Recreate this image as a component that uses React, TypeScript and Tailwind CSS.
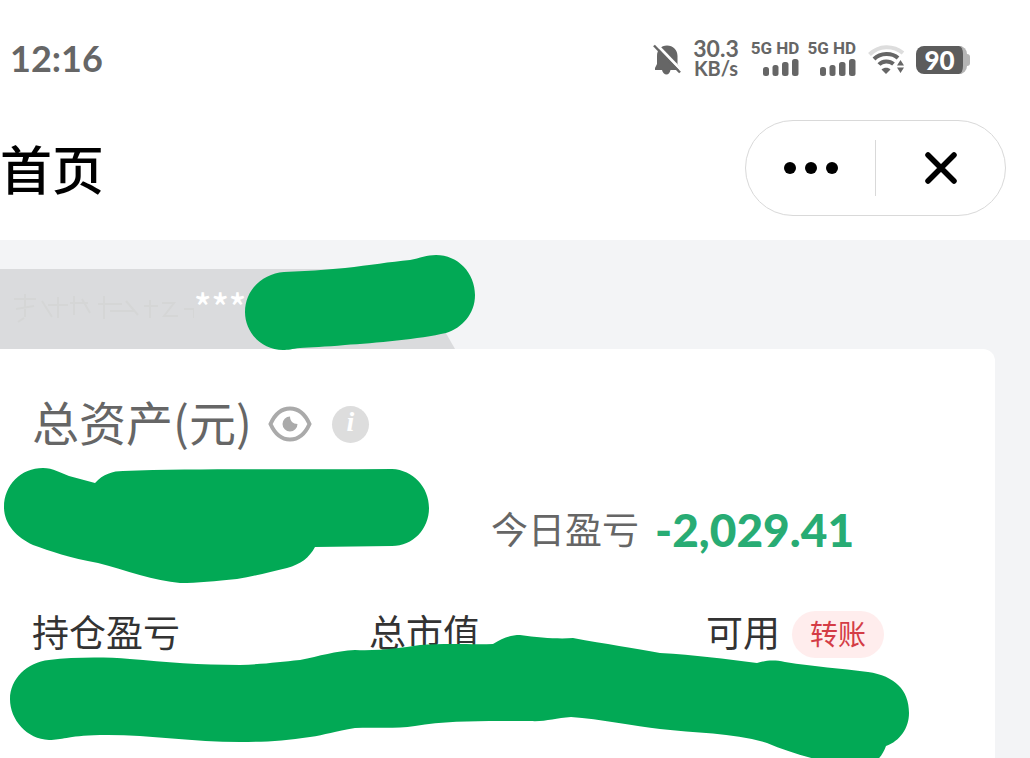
import React from 'react';

const SignalBars: React.FC = () => (
  <svg viewBox="0 0 36 17" className="h-[17px] w-9" fill="#666666">
    <rect x="0" y="8" width="6" height="9" rx="2.5" />
    <rect x="9.5" y="6" width="6" height="11" rx="2.5" />
    <rect x="19" y="3" width="6.5" height="14" rx="2.5" />
    <rect x="29" y="0" width="6.5" height="17" rx="2.5" />
  </svg>
);

const Sim: React.FC = () => (
  <div className="flex flex-col items-end gap-1 pb-1">
    <span className="font-['Roboto',sans-serif] text-[17px] leading-[14px] font-bold whitespace-nowrap">5G HD</span>
    <SignalBars />
  </div>
);

const StatusBar: React.FC = () => (
  <div className="flex h-[120px] items-center justify-between pl-2.5 pr-[60px] font-['Lato',sans-serif] text-[#666666]">
    <span className="pb-1 text-[36px] leading-[40px] font-bold">12:16</span>
    <div className="flex items-center">
      {/* Muted bell */}
      <svg viewBox="0 0 28 32" className="mr-3 h-8 w-7" fill="#666666">
        <path d="M14 1.5C20 1.5 24.5 6 24.5 12V20L27 24V26H17.5C17 28.5 15.5 30.5 13.5 30.5S9.5 28.5 9 26H2V24L4 20V12C4 6 8 1.5 14 1.5Z" />
        <path d="M3 0L29 27" stroke="#ffffff" strokeWidth="3" />
        <path d="M1 1.5L27 28.5" stroke="#666666" strokeWidth="2.5" />
      </svg>
      <div className="mr-3 flex flex-col items-center pb-1">
        <span className="text-[23px] leading-[20px] font-bold">30.3</span>
        <span className="text-[20px] leading-[20px] font-bold">KB/s</span>
      </div>
      <div className="mr-3 flex gap-2">
        <Sim />
        <Sim />
      </div>
      {/* Wi-Fi */}
      <svg viewBox="0 0 38 30" className="mr-2.5 h-[30px] w-[38px]" fill="none" stroke="#666666" strokeWidth="4">
        <path d="M1.5 9.5C11 0 25 0 35 8" stroke="#dddddd" />
        <path d="M6 14C12.5 7.5 24 7.5 30 13" />
        <path d="M11 19.5C14.5 15.5 21.5 15.5 25.5 19" />
        <path d="M18 29L13.5 24.5C16 22 20.5 22 22.5 24.5Z" fill="#666666" stroke="none" />
        <path d="M32.5 15L36 20.5H29ZM32.5 28L36 22.5H29Z" fill="#666666" stroke="none" />
      </svg>
      {/* Battery */}
      <div className="flex items-center">
        <div className="flex h-7 w-[51px] items-center justify-center rounded-lg border-r-4 border-[#b5b5b5] bg-[#5c5c5c] text-[26px] leading-7 font-black text-white">
          90
        </div>
        <div className="h-3 w-[3px] rounded-r bg-[#b5b5b5]" />
      </div>
    </div>
  </div>
);

const NavBar: React.FC = () => (
  <div className="flex items-start justify-between pr-6 pb-6">
    <h1 className="text-[52px] leading-[96px] font-medium text-black">首页</h1>
    <div className="flex h-24 w-[261px] items-center rounded-full border border-[#d9d9d9]">
      <button type="button" aria-label="更多" className="flex h-full flex-1 items-center justify-center gap-[9px]">
        <span className="h-3 w-3 rounded-full bg-black" />
        <span className="h-3 w-3 rounded-full bg-black" />
        <span className="h-3 w-3 rounded-full bg-black" />
      </button>
      <span className="h-14 w-px bg-[#d9d9d9]" />
      <button type="button" aria-label="关闭" className="flex h-full flex-1 items-center justify-center">
        <svg viewBox="0 0 32 32" className="h-8 w-8" stroke="#000000" strokeWidth="5.5" strokeLinecap="round">
          <path d="M3 3L29 29M29 3L3 29" />
        </svg>
      </button>
    </div>
  </div>
);

const AccountTab: React.FC = () => (
  <div className="relative pt-[29px]">
    <div className="flex h-20 w-[455px] items-center bg-[#dadbdd] pl-3 [clip-path:polygon(0_0,90%_0,100%_100%,0_100%)]">
      {/* Smudged account name */}
      <svg viewBox="0 0 182 36" className="h-9 w-[182px] shrink-0" fill="none" stroke="#d5d6d6" strokeWidth="2">
        <path d="M2 8H24M13 3V26M4 18L22 15M6 31L12 27M30 10L40 26M46 6V27M36 14H56M62 5V24M58 12H76M70 8L78 22M92 5V28M86 13H110M98 20H122M114 10L126 24M132 15H146M138 9V27M150 12H162L152 25H166M172 18H182V27" />
      </svg>
      <span className="pb-2 text-[36px] leading-[48px] font-medium text-white">****</span>
    </div>
    <svg viewBox="244 254 232 98" className="absolute top-3.5 left-[244px] z-10 h-[98px] w-[232px]" fill="#02a955">
      <path d="M284 272C305 271 325 270 345 268C370 265 390 262 410 260C420 258 427 255 436 255C458 255 475 273 475 295C475 314 462 328 446 333C420 339 375 343 345 345C325 347 310 347 300 348C292 349 288 350 283 350C261 350 245 332 245 312C245 290 262 274 284 272Z" />
    </svg>
  </div>
);

const AssetCard: React.FC = () => (
  <section className="relative mr-[35px] flex-1 rounded-tr-xl bg-white pt-[43px] pl-8">
    <div className="flex h-16 items-center">
      <h2 className="pb-1.5 text-[47px] leading-[58px] text-[#666666]">总资产(元)</h2>
      <button type="button" aria-label="隐藏金额" className="ml-4">
        <svg viewBox="0 0 44 36" className="h-9 w-11" fill="none">
          <path d="M2.5 18C7 8 13.5 2.5 22 2.5S37 8 41.5 18C37 28 30.5 33.5 22 33.5S7 28 2.500 18Z" stroke="#aaaaaa" strokeWidth="4" />
          <path d="M22 10.5C22 15 25 18 29.5 18A7.5 7.5 0 1 1 22 10.5Z" fill="#aaaaaa" />
        </svg>
      </button>
      <button type="button" aria-label="说明" className="ml-5 flex h-[37px] w-[37px] items-center justify-center rounded-full bg-[#dddddd] pb-1 font-['Liberation_Serif',serif] text-[28px] leading-8 font-bold text-white italic">
        i
      </button>
    </div>

    <div className="mt-3 flex items-center">
      <svg viewBox="4 468 426 115" className="-ml-7 h-[115px] w-[426px]" fill="#02a955">
        <path d="M43 468C53 468 61 473 69 476L95 483C103 474 113 471 123 471C200 468 300 470 392 469C413 470 429 487 429 508C429 529 413 546 392 546L315 547C309 558 301 564 287 568C270 572 255 576 237 579C215 581 198 583 180 583C155 581 125 570 98 563C70 558 50 551 33 545C16 537 4 524 4 507C4 485 21 468 43 468Z" />
      </svg>
      <div className="flex items-center gap-4 pt-2 pl-[61px]">
        <span className="pb-1 text-[37px] leading-[44px] text-[#666666]">今日盈亏</span>
        <span className="font-['Lato',sans-serif] text-[46px] leading-[48px] font-black text-[#28ac74]">-2,029.41</span>
      </div>
    </div>

    <div className="mt-6 grid grid-cols-[35%_35%_1fr] text-[37px] leading-[48px] text-[#333333]">
      <span>持仓盈亏</span>
      <span>总市值</span>
      <div className="flex items-start gap-3">
        <span>可用</span>
        <button type="button" className="mt-1 h-[47px] w-[92px] rounded-full bg-[#ffeded] pb-1 text-[28px] leading-[40px] text-[#d43c46]">
          转账
        </button>
      </div>
    </div>
    <svg viewBox="9 634 902 136" className="absolute top-[285px] left-[9px] h-[136px] w-[902px]" fill="#02a955">
      <path d="M49 660C75 657 105 657 130 659C165 662 200 665 240 665C265 664 280 662 300 660C320 656 335 651 355 650C380 651 400 648 420 645C450 643 475 645 493 644C502 638 510 635 520 635C540 638 560 639 573 638C605 644 635 648 660 653C695 655 725 659 757 663C765 661 772 659 785 662C815 667 840 668 868 672C895 676 909 690 909 713C909 728 900 741 886 746C882 757 876 763 864 768C830 764 795 755 767 743C735 733 695 733 660 729C635 726 600 719 571 717C555 718 545 722 530 721C490 721 450 720 415 726C395 729 375 727 355 728C335 731 325 735 310 737C285 741 265 742 240 742C190 742 145 734 100 735C65 736 63 740 49 740C27 739 10 720 10 699C10 679 27 662 49 660Z" />
    </svg>
  </section>
);

const App: React.FC = () => {
  return (
    <div className="flex h-screen flex-col overflow-hidden bg-[#f3f4f6] font-['Noto_Sans_CJK_SC',sans-serif]">
      <header className="bg-white">
        <StatusBar />
        <NavBar />
      </header>
      <main className="flex flex-1 flex-col">
        <AccountTab />
        <AssetCard />
      </main>
    </div>
  );
};

export default App;
